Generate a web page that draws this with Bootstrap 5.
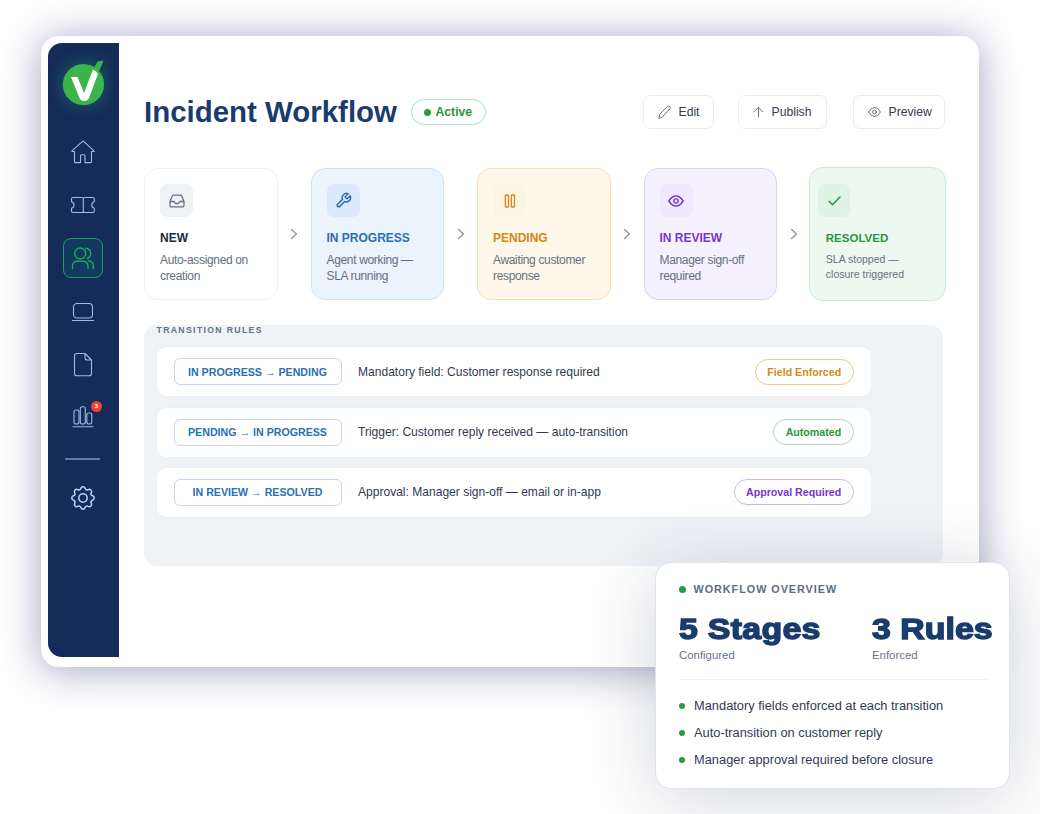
<!DOCTYPE html>
<html lang="en">
<head>
<meta charset="utf-8">
<meta name="viewport" content="width=device-width, initial-scale=1">
<title>Incident Workflow</title>
<link href="https://cdn.jsdelivr.net/npm/bootstrap@5.3.0/dist/css/bootstrap.min.css" rel="stylesheet">
<style>
body{font-family:"Liberation Sans",Arial,sans-serif;background:#fff;width:1040px;height:814px;overflow:hidden;color:#323a52;line-height:1.2}
svg{display:block;fill:none;stroke:currentColor;stroke-linecap:round;stroke-linejoin:round;flex:none}
.app-window{margin:36px 0 0 41px;width:938px;height:631px;border-radius:18px;background:#fff;padding:7px 0 10px 7px;box-shadow:0 3px 40px rgba(60,60,130,.48)}
.side{width:71px;background:#152b59;border-radius:14px 0 0 14px;color:#a0b9ea;padding-right:2px}
.logo-slot{height:82.5px;padding:17px 0 0 1px}
.logo-slot svg{stroke:none;filter:drop-shadow(0 0 9px rgba(40,190,110,.4))}
.side-item{height:53.2px;width:100%}
.side-on{width:40px;height:40px;border:1.3px solid #1aa659;border-radius:8px;background:#123a60;color:#18ac58}
.side-line{width:35px;height:1.5px;background:#5e7b99;margin-top:13.5px}
.gear{color:#bcd4fb;margin-top:26px}
.count{left:43px;top:9.5px;width:11px;height:11px;font-size:6px;background:#ee4238;color:#fff;font-weight:700}
.main-pane{padding:52px 0 0 25px}
.head{height:34px;width:801px}
h1{font-size:29.45px;font-weight:700;color:#193b6d;line-height:34px;width:266.5px;white-space:nowrap;padding-bottom:1px}
.pill-active{height:26px;width:75px;border:1px solid #a9dfc0;color:#2b943c;font-size:12.2px;font-weight:700;padding-left:12px;gap:5px}
.dot{width:7px;height:7px;border-radius:50%;background:#2b9b3d;flex:none}
.tool{height:34px;border:1px solid #ebeef1;border-radius:7px;background:#fff;color:#323b50;font-size:12.2px;padding:0 0 0 14px;display:flex;align-items:center;gap:8px}
.tool svg{color:#69737f}
.steps{margin-top:38px;height:134px;width:801.5px}
.step{width:133.5px;height:132px;border:1px solid;border-radius:14px;padding:15px 0 0 15px;flex:none}
.step-ico{width:33px;height:33px;border-radius:7px}
.step-name{font-size:12px;font-weight:700;line-height:14px;margin-top:14px;white-space:nowrap}
.step-text{font-size:12px;letter-spacing:-.34px;line-height:16px;color:#667080;margin-top:6.5px;white-space:nowrap}
.arrow{width:33px;flex:none;color:#8b93a5}
.s-new{border-color:#eef0f2;color:#232a40}.s-new .step-ico{background:#eef2f5;color:#667486}
.s-prog{border-color:#cfe2f5;background:#ebf3fd;color:#2a70b3}.s-prog .step-ico{background:#dbe9fc}
.s-pend{border-color:#f8dfb3;background:#fef7ea;color:#d58717}.s-pend .step-ico{background:#fef4e4}
.s-rev{border-color:#dbd1f3;background:#f5f1fe;color:#7539cf}.s-rev .step-ico{background:#eee9fd}
.s-res{border-color:#cbe9d6;background:#edf8f0;color:#2a963e;width:136.5px;height:134px;padding-left:15.5px;padding-top:16px;margin-left:-.7px}
.s-res .step-ico{background:#e0f3e5;margin-left:-7.5px;width:32px}
.s-res .step-name{font-size:11.5px}
.s-res .step-text{font-size:10.5px;letter-spacing:0;line-height:15px;margin-top:7px}
.rules{margin-top:24px;width:799px;height:241px;background:#eff3f6;border-radius:13px;padding:0 0 0 12.5px}
.rules-title{font-size:8.7px;letter-spacing:1.34px;font-weight:700;color:#66708a;line-height:10px;height:22.4px}
.rule{width:714px;height:49px;background:#fff;border-radius:9px;margin-bottom:11.3px;padding:0 17px 0 17px;box-shadow:0 0 2px rgba(110,140,160,.08);font-size:12.05px}
.flow{width:168px;height:27px;border:1px solid #c9d4f1;border-radius:6px;color:#2a70b3;font-weight:700;font-size:10.65px;margin-right:16.5px;white-space:nowrap}
.tag{height:26px;border:1px solid;font-size:10.65px;font-weight:700;padding:0 11.3px;white-space:nowrap}
.t-field{border-color:#ecc887;color:#d68a19}.t-auto{border-color:#a2dcb8;color:#2a963e}.t-appr{border-color:#ccb8f2;color:#7635cc}
.overview{left:655px;top:562px;width:355px;height:227px;background:#fff;border:1px solid #dfe3ea;border-radius:16px;padding:20px 0 0 23px;box-shadow:0 10px 76px rgba(35,45,70,.2)}
.ov-title{font-size:10.8px;letter-spacing:.98px;font-weight:700;color:#606b80;line-height:13px}
.ov-title .dot{margin-right:7.5px}
.figure-num{font-size:30px;line-height:34px;font-weight:700;color:#193b6d;-webkit-text-stroke:1.4px #193b6d;white-space:nowrap;transform:scaleX(1.13);transform-origin:0 0}
.num-wide{letter-spacing:.25px}
.figure-label{font-size:11.4px;color:#697391;line-height:14px;margin-top:2px}
.ov-list{border-top:1px solid #eff0f5;width:309px;margin-top:17px;padding-top:12.5px;font-size:12.85px}
.ov-list li{height:27.2px}
.ov-list .dot{width:6px;height:6px;margin-right:9px}
</style>
</head>
<body class="position-relative">
<div class="app-window d-flex">
  <nav class="side d-flex flex-column align-items-center">
    <div class="logo-slot">
      <svg width="43" height="46" viewBox="0 0 43 46"><circle cx="21.500" cy="24.500" r="20.600" fill="#3bb54a"/><path fill="#3bb54a" d="M34.500 3.500q.5-1.800 2.300-2.200L41.500.5 35.500 15l-6-3z"/><path fill="#fff" d="M9 17h6.500l6.500 16L31 9.500q3.500 1.500 5 4.500L27 38q-1.300 3-4.800 3t-4.700-3z"/></svg>
    </div>
    <div class="side-item d-flex align-items-center justify-content-center"><svg width="24" height="24" viewBox="0 0 24 24" stroke-width="1.100"><path d="M3.500 11.500v10.300q0 .8.800.8h5.200v-6.800q0-1 1-1h2.500q1 0 1 1v6.800h5.700q.8 0 .8-.8V11.500M1 10.800L11.600 1.300q.5-.4 1 0L23 10.800v.7h-2.500M1 10.800v.7h2.500"/></svg></div>
    <div class="side-item d-flex align-items-center justify-content-center"><svg width="26" height="18" viewBox="0 0 26 18" stroke-width="1.100"><path d="M3 1.500h9q1.300 0 1.300 1.300 0-1.300 1.300-1.300h8.200q1.500 0 1.500 1.500v2.800q-2.500.6-2.500 3.200t2.500 3.200V15q0 1.500-1.500 1.500h-8.200q-1.300 0-1.300-1.300 0 1.300-1.300 1.300H3q-1.500 0-1.500-1.500v-2.800Q4 11.600 4 9T1.500 5.800V3Q1.500 1.500 3 1.500zM13.300 3v12"/></svg></div>
    <div class="side-item d-flex align-items-center justify-content-center"><div class="side-on d-flex align-items-center justify-content-center"><svg width="24" height="23" viewBox="0 0 24 23" stroke-width="1.400"><circle cx="9.200" cy="6.500" r="5.500"/><path d="M1.500 21.500v-2.300q0-5 5-5h5.500q5 0 5 5v2.300M14.800 1.300a5.300 5.300 0 011.500 10.200M17.500 13.700q4.800.5 4.800 5v2.800"/></svg></div></div>
    <div class="side-item d-flex align-items-center justify-content-center"><svg width="24" height="20" viewBox="0 0 24 20" stroke-width="1.100"><rect x="2.500" y="1.500" width="19" height="14.500" rx="3.500"/><path d="M1.500 18.500h21"/></svg></div>
    <div class="side-item d-flex align-items-center justify-content-center"><svg width="20" height="25" viewBox="0 0 20 25" stroke-width="1.100"><path d="M12 1.500H4Q1.500 1.500 1.500 4v17.500Q1.500 23.800 4 23.800h12q2.500 0 2.500-2.300V8zv4.200Q12 8 14.200 8h4.300"/></svg></div>
    <div class="side-item d-flex align-items-center justify-content-center position-relative pb-1"><svg width="22" height="23" viewBox="0 0 22 23" stroke-width="1.100"><rect x="2" y="5" width="5" height="14" rx="2"/><rect x="8.300" y="1.700" width="5" height="17.300" rx="2"/><rect x="14.800" y="8" width="5" height="11" rx="2"/><path d="M1 21.800h20"/></svg><span class="count position-absolute rounded-circle d-flex align-items-center justify-content-center">3</span></div>
    <div class="side-line"></div>
    <svg class="gear" width="24" height="24" viewBox="0 0 24 24" stroke-width="1.500"><circle cx="12" cy="12" r="4.200"/><path d="M21.550 9.800A2.300 2.300 0 0121.550 14.200 1.900 1.900 0 0020.310 17.190 2.300 2.300 0 0117.190 20.310 1.900 1.900 0 0014.200 21.550 2.300 2.300 0 019.800 21.550 1.900 1.900 0 006.810 20.310 2.300 2.300 0 013.690 17.190 1.900 1.900 0 002.450 14.200 2.300 2.300 0 012.450 9.800 1.900 1.900 0 003.690 6.810 2.300 2.300 0 016.810 3.690 1.900 1.900 0 009.800 2.450 2.300 2.300 0 0114.200 2.450 1.900 1.900 0 0017.190 3.690 2.300 2.300 0 0120.310 6.810 1.900 1.900 0 0021.550 9.800z"/></svg>
  </nav>
  <main class="main-pane">
    <header class="head d-flex align-items-center">
      <h1 class="mb-0">Incident Workflow</h1>
      <span class="pill-active rounded-pill d-flex align-items-center"><i class="dot"></i>Active</span>
      <button class="tool ms-auto" style="width:71px"><svg width="13" height="14" viewBox="0 0 13 14"><path d="M1 13l.8-3.800L9.300 1.500q1.300-1 2.400 0t0 2.500L4.300 12z"/></svg>Edit</button>
      <button class="tool" style="width:89px;margin-left:24px"><svg width="11" height="12" viewBox="0 0 11 12"><path d="M5.500 11V1.500M1 5.800l4.500-4.500L10 5.800"/></svg>Publish</button>
      <button class="tool" style="width:92.500px;margin-left:26px"><svg width="13" height="12" viewBox="0 0 13 12"><path d="M.6 6Q3 1.500 6.500 1.500T12.400 6Q10 10.500 6.500 10.500T.6 6z"/><circle cx="6.500" cy="6" r="1.900"/></svg>Preview</button>
    </header>
    <section class="steps d-flex align-items-center">
      <div class="step s-new"><div class="step-ico d-flex align-items-center justify-content-center"><svg width="16" height="14" viewBox="0 0 16 14" stroke-width="1.300"><path d="M1 7.500L3.300 2q.4-.9 1.300-.9h6.800q.9 0 1.300.9L15 7.500v4q0 1.400-1.400 1.400H2.400Q1 12.900 1 11.500zh3.600q.7 0 1 .8.500 1.200 1.200 1.200h2.400q.7 0 1.200-1.200.3-.8 1-.8H15"/></svg></div><div class="step-name">NEW</div><div class="step-text">Auto-assigned on<br>creation</div></div>
      <div class="arrow d-flex justify-content-center"><svg width="8" height="12" viewBox="0 0 8 12" stroke-width="1.300"><path d="M1.500 1.500L6.500 6l-5 4.500"/></svg></div>
      <div class="step s-prog"><div class="step-ico d-flex align-items-center justify-content-center"><svg width="17" height="17" viewBox="0 0 24 24" stroke-width="2.100"><path d="M14.700 6.300a1 1 0 000 1.400l1.600 1.600a1 1 0 001.400 0l3.800-3.800a6 6 0 01-7.900 7.900l-6.900 6.900a2.100 2.100 0 01-3-3l6.900-6.900a6 6 0 017.900-7.900z"/></svg></div><div class="step-name">IN PROGRESS</div><div class="step-text">Agent working —<br>SLA running</div></div>
      <div class="arrow d-flex justify-content-center"><svg width="8" height="12" viewBox="0 0 8 12" stroke-width="1.300"><path d="M1.500 1.500L6.500 6l-5 4.500"/></svg></div>
      <div class="step s-pend"><div class="step-ico d-flex align-items-center justify-content-center"><svg width="12" height="14" viewBox="0 0 12 14" stroke-width="1.300"><rect x="1.300" y="1" width="3.200" height="12" rx=".8"/><rect x="7.300" y="1" width="3.200" height="12" rx=".8"/></svg></div><div class="step-name">PENDING</div><div class="step-text">Awaiting customer<br>response</div></div>
      <div class="arrow d-flex justify-content-center"><svg width="8" height="12" viewBox="0 0 8 12" stroke-width="1.300"><path d="M1.500 1.500L6.500 6l-5 4.500"/></svg></div>
      <div class="step s-rev"><div class="step-ico d-flex align-items-center justify-content-center"><svg width="16" height="12" viewBox="0 0 16 12" stroke-width="1.400"><path d="M.8 6Q4 1 8 1t7.200 5Q12 11 8 11T.8 6z"/><circle cx="8" cy="6" r="2.100"/></svg></div><div class="step-name">IN REVIEW</div><div class="step-text">Manager sign-off<br>required</div></div>
      <div class="arrow d-flex justify-content-center"><svg width="8" height="12" viewBox="0 0 8 12" stroke-width="1.300"><path d="M1.500 1.500L6.500 6l-5 4.500"/></svg></div>
      <div class="step s-res"><div class="step-ico d-flex align-items-center justify-content-center"><svg width="13" height="10" viewBox="0 0 13 10" stroke-width="1.500"><path d="M1 5.200L4.500 8.700 12 1"/></svg></div><div class="step-name">RESOLVED</div><div class="step-text">SLA stopped —<br>closure triggered</div></div>
    </section>
    <section class="rules">
      <div class="rules-title">TRANSITION RULES</div>
      <div class="rule d-flex align-items-center"><span class="flow d-flex align-items-center justify-content-center">IN PROGRESS → PENDING</span><span>Mandatory field: Customer response required</span><span class="tag t-field rounded-pill d-flex align-items-center ms-auto">Field Enforced</span></div>
      <div class="rule d-flex align-items-center"><span class="flow d-flex align-items-center justify-content-center">PENDING → IN PROGRESS</span><span>Trigger: Customer reply received — auto-transition</span><span class="tag t-auto rounded-pill d-flex align-items-center ms-auto">Automated</span></div>
      <div class="rule d-flex align-items-center"><span class="flow d-flex align-items-center justify-content-center">IN REVIEW → RESOLVED</span><span>Approval: Manager sign-off — email or in-app</span><span class="tag t-appr rounded-pill d-flex align-items-center ms-auto">Approval Required</span></div>
    </section>
  </main>
</div>
<aside class="overview position-absolute">
  <div class="ov-title d-flex align-items-center"><i class="dot"></i>WORKFLOW OVERVIEW</div>
  <div class="d-flex" style="margin-top:15.500px">
    <div style="width:193px"><div class="figure-num num-wide">5 Stages</div><div class="figure-label">Configured</div></div>
    <div><div class="figure-num">3 Rules</div><div class="figure-label">Enforced</div></div>
  </div>
  <ul class="ov-list list-unstyled mb-0">
    <li class="d-flex align-items-center"><i class="dot"></i>Mandatory fields enforced at each transition</li>
    <li class="d-flex align-items-center"><i class="dot"></i>Auto-transition on customer reply</li>
    <li class="d-flex align-items-center"><i class="dot"></i>Manager approval required before closure</li>
  </ul>
</aside>
<script src="https://cdn.jsdelivr.net/npm/bootstrap@5.3.0/dist/js/bootstrap.bundle.min.js"></script>
</body>
</html>
